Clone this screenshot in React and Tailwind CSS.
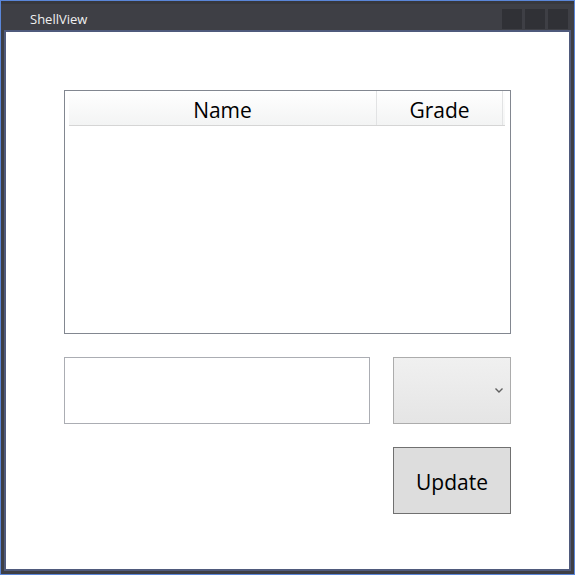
export default function App() {
  return (
    <div className="w-[575px] h-[575px] border border-[#5a86d8] bg-[#3e3f45] flex flex-col" style={{ fontFamily: '"Open Sans", "Noto Sans", sans-serif' }}>
      <div className="h-[29px] shrink-0 flex items-center border-t-[3px] border-[#37383d]">
        <span className="ml-[29px] text-[13px] text-[#f0f0f0] leading-none mt-[4px]">ShellView</span>
        <div className="ml-auto mr-[6px] flex gap-[3px] mt-[4px]">
          <div className="w-[20px] h-[20px] bg-[#303136]" />
          <div className="w-[20px] h-[20px] bg-[#303136]" />
          <div className="w-[20px] h-[20px] bg-[#303136]" />
        </div>
      </div>
      <div className="flex-1 mx-[3px] mb-[3px] border-2 border-[#4f5a7c] bg-white">
        <div className="pl-[58px] pt-[58px] flex flex-col">
          <div className="w-[447px] h-[244px] border border-[#828790] flex flex-col">
            <div className="flex ml-[4px] mr-[5px] h-[35px] border-b border-[#d5d5d5] bg-gradient-to-b from-white to-[#f3f4f4]">
              <div className="w-[308px] border-r border-[#e2e3e4] flex items-center justify-center pt-[6px] text-[21px] text-black">Name</div>
              <div className="w-[126px] border-r border-[#e2e3e4] flex items-center justify-center pt-[6px] text-[21px] text-black">Grade</div>
            </div>
          </div>
          <div className="flex gap-[23px] mt-[23px]">
            <div className="w-[306px] h-[67px] border border-[#abadb3] bg-white" />
            <div className="w-[118px] h-[67px] border border-[#acacac] bg-gradient-to-b from-[#f0f0f0] to-[#e5e5e5] flex items-center justify-end pr-[7px]">
              <svg width="8" height="5" viewBox="0 0 8 5"><path d="M0.5 0.5 L4 4 L7.5 0.5" fill="none" stroke="#606060" strokeWidth="1.4" /></svg>
            </div>
          </div>
          <div className="flex mt-[23px]">
            <div className="ml-[329px] w-[118px] h-[67px] border border-[#707070] bg-[#dddddd] flex items-center justify-center pt-[5px] text-[21px] text-black">Update</div>
          </div>
        </div>
      </div>
    </div>
  );
}
